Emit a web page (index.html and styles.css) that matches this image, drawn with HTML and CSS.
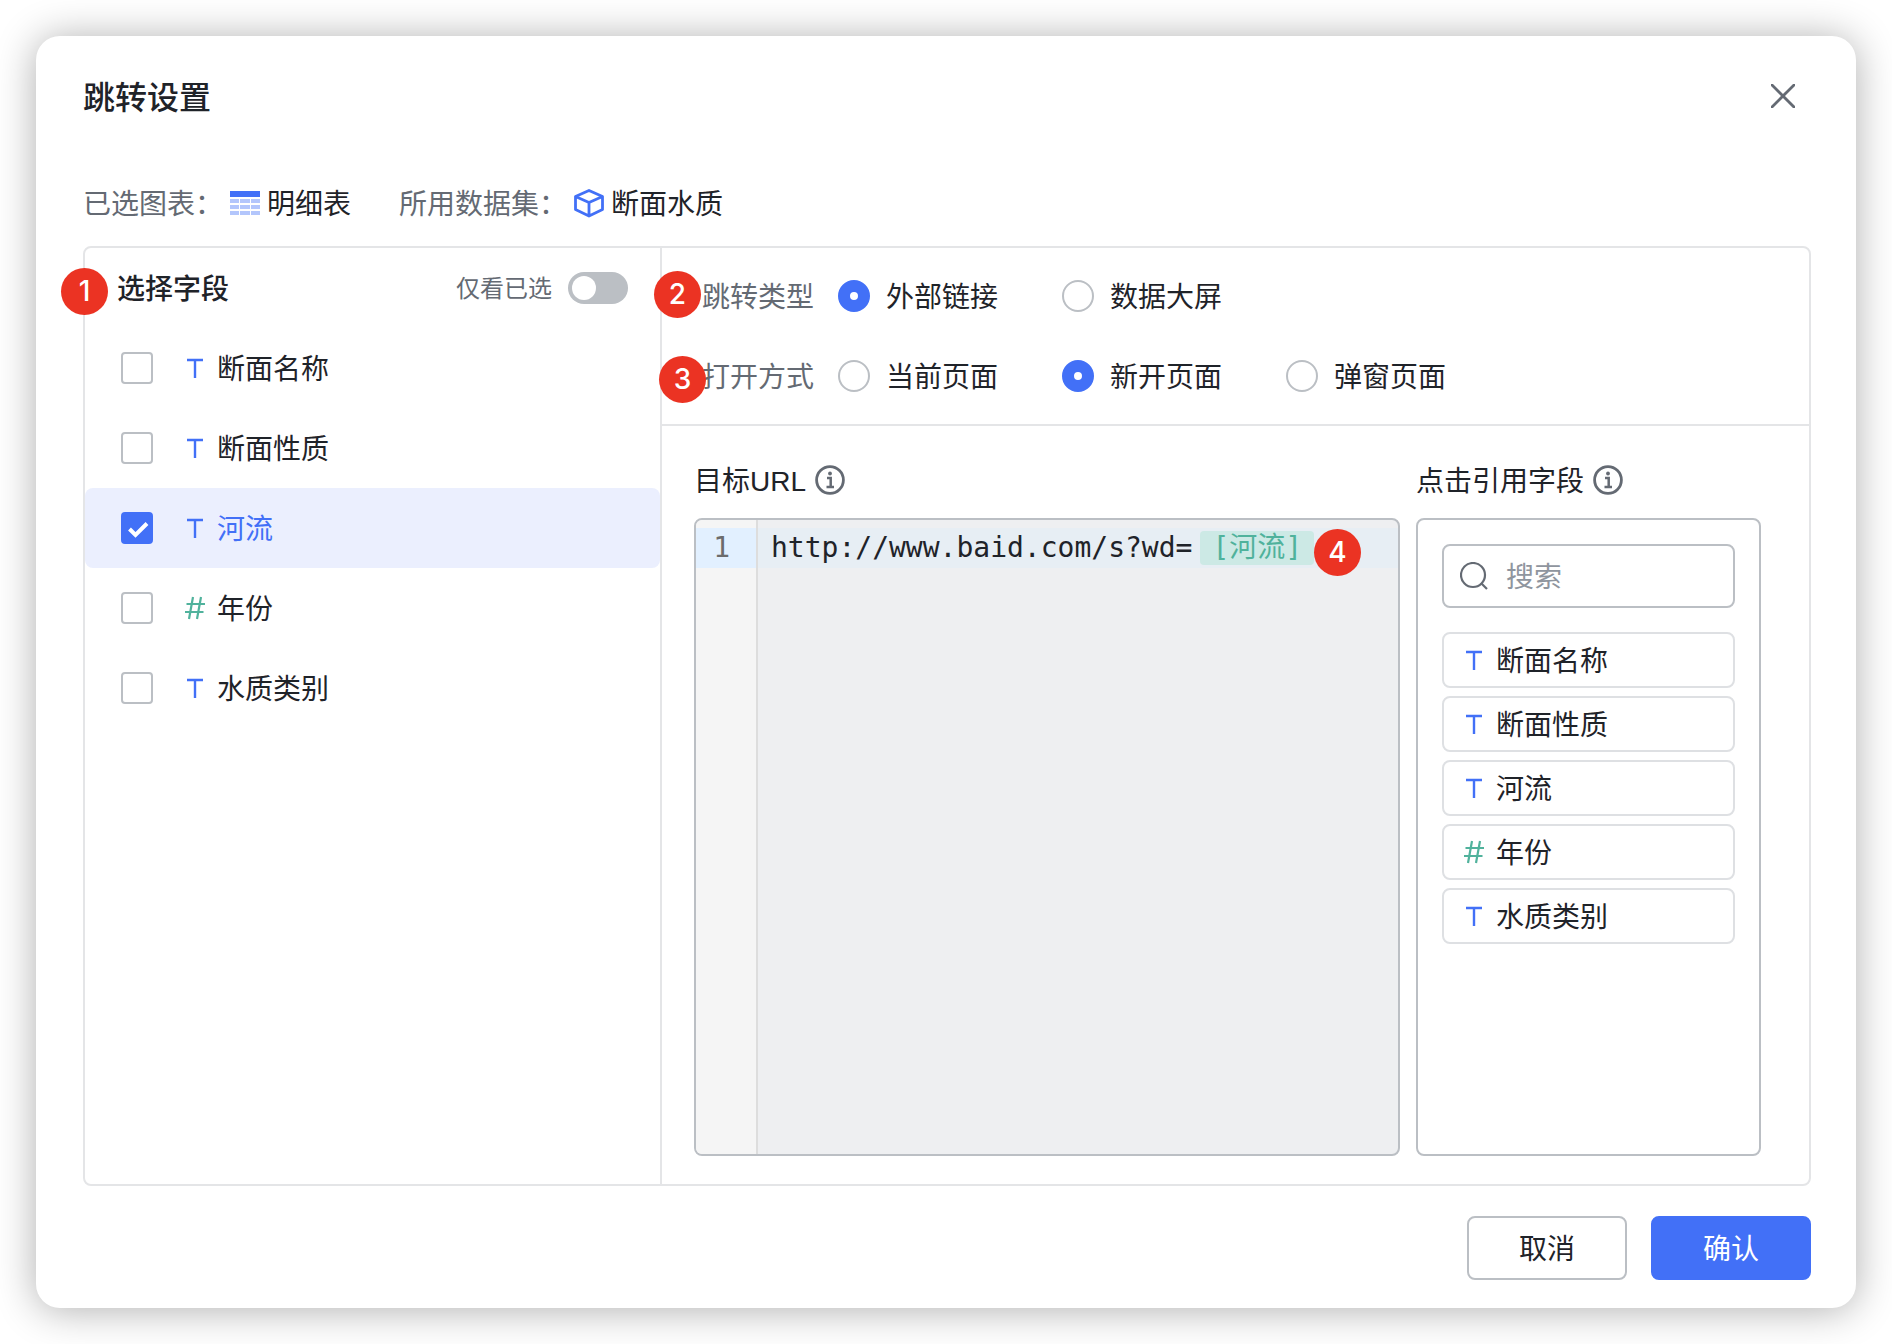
FILE: index.html
```html
<!DOCTYPE html>
<html lang="zh-CN">
<head>
<meta charset="utf-8">
<meta name="viewport" content="width=device-width, initial-scale=1">
<title>跳转设置</title>
<link rel="stylesheet" href="styles.css">
</head>
<body>
<svg class="sprite" aria-hidden="true">
  <symbol id="text-type" viewBox="0 0 20 24"><path d="M2 4h16M10 4v18" fill="none" stroke="currentColor" stroke-width="2.400"/></symbol>
  <symbol id="number-type" viewBox="0 0 20 24"><path d="M1.500 8h18.500M0 16h18.500M8 1L4 23M16 1l-4 22" fill="none" stroke="currentColor" stroke-width="2.200"/></symbol>
  <symbol id="info" viewBox="0 0 30 30">
    <circle cx="15" cy="15" r="13.400" fill="none" stroke="currentColor" stroke-width="2.800"/>
    <circle cx="15" cy="8.500" r="1.900" fill="currentColor"/>
    <path d="M12 13h3.700v8.500M11.500 22h7.500" fill="none" stroke="currentColor" stroke-width="2.500"/>
  </symbol>
</svg>
<main class="dialog" role="dialog" aria-labelledby="dialog-title">
  <header class="dialog-header">
    <h1 id="dialog-title">跳转设置</h1>
    <button class="close" type="button" aria-label="关闭">
      <svg width="24" height="24" viewBox="0 0 24 24"><path d="M1 1l22 22M23 1L1 23" stroke="currentColor" stroke-width="2.800" stroke-linecap="round"/></svg>
    </button>
  </header>

  <div class="meta">
    <span class="meta-label">已选图表：</span>
    <svg class="meta-icon" width="30" height="30" viewBox="0 0 30 30">
      <path fill="#4270f7" d="M0 3h30v6H0z"/>
      <path fill="#b3c6fc" d="M0 11h9v4H0zM10 11h10v4H10zM21 11h9v4h-9zM0 17h9v4H0zM10 17h10v4H10zM21 17h9v4h-9zM0 23h9v4H0zM10 23h10v4H10zM21 23h9v4h-9z"/>
    </svg>
    <span class="meta-value">明细表</span>
    <span class="meta-label second">所用数据集：</span>
    <svg class="meta-icon" width="30" height="30" viewBox="0 0 30 30"><path d="M15 2.500l13.500 6v13L15 28 1.500 21.500v-13zM1.500 8.500l13.500 6 13.500-6M15 14.500v13" fill="none" stroke="#4270f7" stroke-width="2.800" stroke-linejoin="round"/></svg>
    <span class="meta-value">断面水质</span>
  </div>

  <div class="panel">
    <section class="fields">
      <div class="fields-header">
        <span class="badge badge-1">1</span>
        <h2>选择字段</h2>
        <label class="switch">仅看已选<input type="checkbox" role="switch"></label>
      </div>
      <label class="field"><input type="checkbox"><svg class="type"><use href="#text-type"/></svg>断面名称</label>
      <label class="field"><input type="checkbox"><svg class="type"><use href="#text-type"/></svg>断面性质</label>
      <label class="field selected"><input type="checkbox" checked><svg class="type"><use href="#text-type"/></svg>河流</label>
      <label class="field"><input type="checkbox"><svg class="type number"><use href="#number-type"/></svg>年份</label>
      <label class="field"><input type="checkbox"><svg class="type"><use href="#text-type"/></svg>水质类别</label>
    </section>

    <section class="settings">
      <div class="options">
        <div class="option-row" role="radiogroup" aria-labelledby="jump-type">
          <span class="badge badge-2">2</span>
          <span class="option-label" id="jump-type">跳转类型</span>
          <label class="radio"><input type="radio" name="type" checked>外部链接</label>
          <label class="radio"><input type="radio" name="type">数据大屏</label>
        </div>
        <div class="option-row" role="radiogroup" aria-labelledby="open-mode">
          <span class="badge badge-3">3</span>
          <span class="option-label" id="open-mode">打开方式</span>
          <label class="radio"><input type="radio" name="mode">当前页面</label>
          <label class="radio"><input type="radio" name="mode" checked>新开页面</label>
          <label class="radio"><input type="radio" name="mode">弹窗页面</label>
        </div>
      </div>

      <div class="target">
        <div class="column url">
          <h3><span id="url-title">目标<span class="latin">URL</span></span><svg class="info"><use href="#info"/></svg></h3>
          <div class="editor">
            <div class="gutter"><span class="line-number">1</span></div>
            <div class="code" contenteditable="true" spellcheck="false" role="textbox" aria-labelledby="url-title"><div class="line">http://www.baid.com/s?wd=<span class="chip">[河流]</span><span class="badge badge-4" contenteditable="false">4</span></div></div>
          </div>
        </div>
        <div class="column refs">
          <h3>点击引用字段<svg class="info"><use href="#info"/></svg></h3>
          <div class="ref-box">
            <label class="search">
              <svg width="28" height="28" viewBox="0 0 28 28"><circle cx="13" cy="13" r="12" fill="none" stroke="currentColor" stroke-width="2.200"/><path d="M21 21l6 6" stroke="currentColor" stroke-width="2.200"/></svg>
              <input type="search" placeholder="搜索" aria-label="搜索">
            </label>
            <div class="ref-list">
              <button type="button" class="ref"><svg class="type"><use href="#text-type"/></svg>断面名称</button>
              <button type="button" class="ref"><svg class="type"><use href="#text-type"/></svg>断面性质</button>
              <button type="button" class="ref"><svg class="type"><use href="#text-type"/></svg>河流</button>
              <button type="button" class="ref"><svg class="type number"><use href="#number-type"/></svg>年份</button>
              <button type="button" class="ref"><svg class="type"><use href="#text-type"/></svg>水质类别</button>
            </div>
          </div>
        </div>
      </div>
    </section>
  </div>

  <footer class="actions">
    <button type="button" class="btn">取消</button>
    <button type="button" class="btn primary">确认</button>
  </footer>
</main>
</body>
</html>
```
FILE: styles.css
```css
* { box-sizing: border-box; }

body {
  margin: 0;
  padding: 36px;
  background: #fff;
  color: #1f2329;
  font: 28px/40px "Noto Sans", "Noto Sans CJK SC", sans-serif;
}

h1, h2, h3 { margin: 0; }
button, input { font: inherit; color: inherit; }
svg { flex: none; }
.sprite { position: absolute; width: 0; height: 0; }
.latin { font-family: "Liberation Sans", sans-serif; line-height: 1; }

.dialog {
  display: flex;
  flex-direction: column;
  min-height: calc(100vh - 72px);
  padding: 36px 45px 28px 47px;
  border-radius: 24px;
  background: #fff;
  box-shadow: 0 2px 40px rgba(0, 0, 0, .32);
}

.dialog-header {
  display: flex;
  align-items: center;
  justify-content: space-between;
  height: 48px;
}
h1 { padding-top: 2px; font-size: 32px; line-height: 48px; font-weight: 500; }
.close {
  display: flex;
  padding: 0;
  margin-right: 16px;
  border: 0;
  background: none;
  color: #646a73;
}

.meta {
  display: flex;
  align-items: center;
  height: 40px;
  margin: 63px 0 23px;
}
.meta-label { color: #646a73; }
.meta-label.second { margin-left: 48px; }
.meta-icon { margin: 0 7px; }

.panel {
  flex: 1;
  display: grid;
  grid-template-columns: 577px 1fr;
  border: 2px solid #e4e5e7;
  border-radius: 8px;
}

.fields { border-right: 2px solid #e4e5e7; }
.fields-header {
  position: relative;
  display: flex;
  align-items: center;
  justify-content: space-between;
  height: 80px;
  padding: 0 32px;
}
h2 { font-size: 28px; font-weight: 500; }
.switch {
  display: flex;
  align-items: center;
  gap: 16px;
  font-size: 24px;
  color: #646a73;
}
.switch input {
  appearance: none;
  display: flex;
  width: 60px;
  height: 32px;
  margin: 0;
  padding: 4px;
  border-radius: 16px;
  background: #bbbfc4;
}
.switch input::before {
  content: "";
  width: 24px;
  height: 24px;
  border-radius: 50%;
  background: #fff;
}
.switch input:checked { justify-content: flex-end; background: #4270f7; }

.field {
  display: flex;
  align-items: center;
  height: 80px;
  padding: 0 36px;
  border-radius: 8px;
}
.field input {
  appearance: none;
  width: 32px;
  height: 32px;
  margin: 0 32px 0 0;
  border: 2px solid #bbbfc4;
  border-radius: 4px;
  background: #fff;
}
.field input:checked {
  border-color: #4270f7;
  background: #4270f7 url("data:image/svg+xml,%3Csvg xmlns='http://www.w3.org/2000/svg' viewBox='0 0 28 28'%3E%3Cpath d='M6.500 15l6 6L24 9.500' fill='none' stroke='white' stroke-width='4'/%3E%3C/svg%3E") center / 28px 28px no-repeat;
}
.field.selected { background: #ebeffe; color: #4270f7; }
.type { width: 20px; height: 24px; margin-right: 12px; color: #4270f7; }
.type.number { color: #50b29c; }

.settings { display: flex; flex-direction: column; }
.options {
  display: flex;
  flex-direction: column;
  gap: 40px;
  padding: 28px 40px;
  border-bottom: 2px solid #e4e5e7;
}
.option-row {
  position: relative;
  display: flex;
  align-items: center;
  gap: 64px;
  height: 40px;
}
.option-label { margin-right: -40px; color: #646a73; }
.radio { display: flex; align-items: center; gap: 16px; }
.radio input {
  appearance: none;
  width: 32px;
  height: 32px;
  margin: 0;
  border: 2px solid #bbbfc4;
  border-radius: 50%;
  background: #fff;
}
.radio input:checked { border: 12px solid #4270f7; }

.target {
  flex: 1;
  display: flex;
  gap: 16px;
  padding: 34px 48px 28px 32px;
}
.column { display: flex; flex-direction: column; gap: 18px; }
.url { flex: 1; }
.refs { width: 345px; }
h3 {
  display: flex;
  align-items: center;
  gap: 9px;
  font-size: 28px;
  line-height: 40px;
  font-weight: 400;
}
.info { width: 30px; height: 30px; color: #646a73; }

.editor {
  flex: 1;
  display: flex;
  border: 2px solid #bbbfc4;
  border-radius: 8px;
  background: #eeeff1;
  font-family: "DejaVu Sans Mono", "Noto Sans CJK SC", monospace;
}
.gutter {
  width: 62px;
  padding-top: 8px;
  border-right: 2px solid #ddd;
  border-radius: 6px 0 0 6px;
  background: #f5f5f5;
  color: #6c6c6c;
}
.line-number {
  display: block;
  padding-right: 26px;
  background: #e2f0ff;
  text-align: right;
}
.code { flex: 1; padding-top: 8px; outline: none; }
.line {
  position: relative;
  display: flex;
  align-items: center;
  height: 40px;
  padding-left: 13px;
  background: #e7eef4;
}
.chip {
  height: 34px;
  margin-left: 8px;
  padding: 0 12px;
  border-radius: 4px;
  background: #cce9e5;
  color: #50b29c;
  line-height: 34px;
}

.ref-box {
  flex: 1;
  display: flex;
  flex-direction: column;
  gap: 24px;
  padding: 24px;
  border: 2px solid #bbbfc4;
  border-radius: 8px;
}
.search {
  display: flex;
  align-items: center;
  gap: 18px;
  height: 64px;
  padding: 0 16px;
  border: 2px solid #bbbfc4;
  border-radius: 8px;
  color: #646a73;
}
.search input {
  flex: 1;
  min-width: 0;
  padding: 0;
  border: 0;
  outline: none;
  background: none;
}
.search input::placeholder { color: #8f959e; }
.ref-list { display: flex; flex-direction: column; gap: 8px; }
.ref {
  display: flex;
  align-items: center;
  height: 56px;
  padding: 0 20px;
  border: 2px solid #dee0e3;
  border-radius: 8px;
  background: #fff;
}

.actions {
  display: flex;
  justify-content: flex-end;
  gap: 24px;
  margin-top: 30px;
}
.btn {
  width: 160px;
  height: 64px;
  border: 2px solid #bbbfc4;
  border-radius: 8px;
  background: #fff;
}
.btn.primary { border-color: #4270f7; background: #4270f7; color: #fff; }

/* numbered step markers lying over the form */
.badge {
  position: absolute;
  width: 47px;
  height: 47px;
  border-radius: 50%;
  background: #eb3323;
  color: #fff;
  font: 500 28px/46px Inter, sans-serif;
  text-align: center;
}
.badge-1 { left: -24px; top: 20px; }
.badge-2 { left: -48px; top: -5px; }
.badge-3 { left: -43px; top: 0; }
.badge-4 { left: 556px; top: 1px; }
```
